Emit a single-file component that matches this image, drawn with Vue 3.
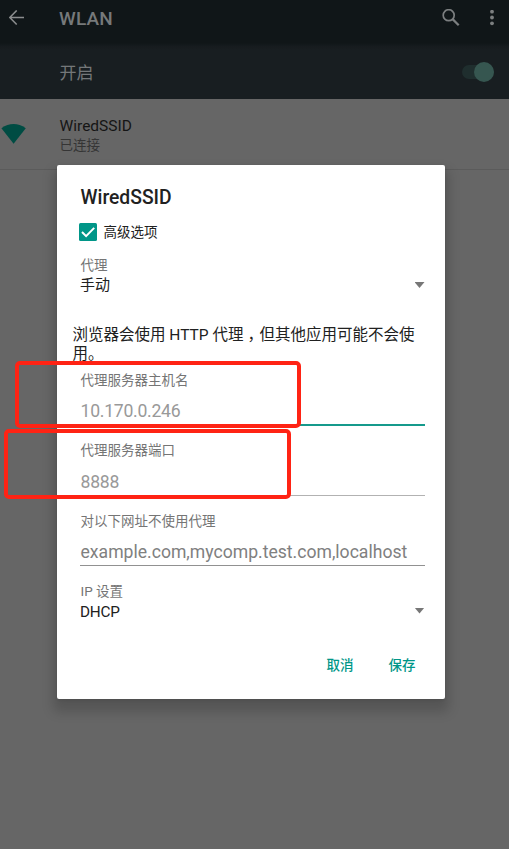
<script setup>
import { ref } from 'vue'

const advanced = ref(true)
const fields = [
  { label: '代理服务器主机名', value: '10.170.0.246', state: 'focused' },
  { label: '代理服务器端口', value: '8888', state: 'light' },
  { label: '对以下网址不使用代理', value: 'example.com,mycomp.test.com,localhost', state: 'hint' },
]
</script>

<template>
  <div class="screen">
    <header class="toolbar">
      <svg class="back" width="16" height="16" viewBox="0 0 16 16" fill="none" stroke="#8b8d8e" stroke-width="1.6">
        <path d="M15 7.5H1M7.7 .5L.8 7.5l6.9 7" />
      </svg>
      <h1>WLAN</h1>
      <svg class="search" width="18" height="18" viewBox="0 0 18 18" fill="none" stroke="#7c7f80">
        <circle cx="6.7" cy="6.2" r="5.5" stroke-width="1.7" />
        <path d="M10.6 10.1L16.7 16.2" stroke-width="2.2" />
      </svg>
      <svg class="more" width="4" height="16" viewBox="0 0 4 16" fill="#7c7f80">
        <circle cx="2" cy="1.7" r="1.9" /><circle cx="2" cy="7.5" r="1.9" /><circle cx="2" cy="13.3" r="1.9" />
      </svg>
    </header>
    <div class="switchbar">
      <span>开启</span>
      <div class="switch"><i class="thumb"></i></div>
    </div>
    <div class="network">
      <svg width="26" height="20" viewBox="0 0 26 20" fill="#004c43">
        <path d="M1.4 4.2Q13.5-4 25.8 4.2L13.6 19.8Z" />
      </svg>
      <div class="network-text">
        <div class="ssid">WiredSSID</div>
        <div class="status">已连接</div>
      </div>
    </div>

    <section class="dialog">
      <h2>WiredSSID</h2>
      <label class="check" @click="advanced = !advanced">
        <span class="box">
          <svg v-if="advanced" width="18" height="18" viewBox="0 0 18 18" fill="none" stroke="#fff" stroke-width="2">
            <path d="M3 9l4.1 4.1L15.2 4.9" />
          </svg>
        </span>
        <span class="check-text">高级选项</span>
      </label>
      <div class="label">代理</div>
      <div class="select manual"><span>手动</span><i class="caret"></i></div>
      <p class="note">浏览器会使用 HTTP 代理<span class="comma">，</span>但其他应用可能不会使用。</p>
      <div v-for="f in fields" :key="f.label" class="field" :class="f.state">
        <div class="label">{{ f.label }}</div>
        <div class="value">{{ f.value }}</div>
      </div>
      <div class="label">IP 设置</div>
      <div class="select dhcp"><span>DHCP</span><i class="caret"></i></div>
      <div class="actions"><span>取消</span><span>保存</span></div>
    </section>

    <div class="mark host"></div>
    <div class="mark port"></div>
  </div>
</template>

<style>
body {
  background: #666;
}
</style>

<style scoped>
* {
  box-sizing: border-box;
}
.screen {
  position: relative;
  width: 509px;
  height: 849px;
  overflow: hidden;
  background: #666;
  font-family: Roboto, "Noto Sans CJK SC", sans-serif;
}
h1, h2, p {
  margin: 0;
}
.toolbar {
  display: flex;
  align-items: center;
  height: 46px;
  padding: 0 15.5px 11px 8.5px;
  background: linear-gradient(#101618 43px, #151b1e 46px);
}
h1 {
  flex: 1;
  margin-left: 34.5px;
  font-size: 19px;
  line-height: 22px;
  font-weight: 500;
  letter-spacing: 0.2px;
  color: #76797a;
  padding-top: 2px;
}
.search {
  margin-right: 30px;
}
.switchbar {
  display: flex;
  align-items: center;
  justify-content: space-between;
  height: 53px;
  padding: 0 15px 2px 59.5px;
  background: linear-gradient(#161b1e, #181e21 4px);
  color: #747779;
  font-size: 17px;
}
.switch {
  display: flex;
  justify-content: flex-end;
  align-items: center;
  width: 32px;
  height: 14px;
  border-radius: 7px;
  background: #1f2e2e;
}
.thumb {
  width: 20px;
  height: 20px;
  flex: none;
  border-radius: 50%;
  background: #365650;
}
.network {
  display: flex;
  height: 71px;
  border-bottom: 1px solid #5b5b5b;
}
.network svg {
  margin: 24.5px 33.5px 0 0;
}
.network-text {
  padding-top: 17px;
}
.ssid {
  font-size: 15.5px;
  line-height: 20px;
  color: #151515;
}
.status {
  font-size: 13.5px;
  line-height: 19px;
  color: #353535;
}
.dialog {
  position: absolute;
  left: 57px;
  top: 165px;
  width: 387.5px;
  height: 533.5px;
  padding: 21px 20px 0 23px;
  border-radius: 2px;
  background: #fff;
  color: #212121;
  box-shadow: 0 9px 12px 4px rgba(0, 0, 0, 0.17), 0 1px 3px rgba(0, 0, 0, 0.1);
}
h2 {
  padding-left: 0.5px;
  font-size: 19.3px;
  line-height: 24px;
  font-weight: 500;
}
.check {
  display: flex;
  align-items: center;
  gap: 6.5px;
  height: 18px;
  margin: 13px 0 15px -1px;
  font-size: 13.5px;
}
.check-text {
  line-height: 18px;
}
.box {
  width: 18px;
  height: 18px;
  border-radius: 1.5px;
  background: #009688;
}
.box svg {
  display: block;
}
.label {
  height: 18px;
  padding-left: 0.5px;
  font-size: 13.5px;
  line-height: 18px;
  color: #757575;
}
.select {
  display: flex;
  align-items: center;
  justify-content: space-between;
  height: 22px;
  font-size: 15px;
}
.manual span {
  line-height: 20px;
}
.dhcp span {
  padding-top: 2px;
  font-size: 15.3px;
  letter-spacing: -0.2px;
}
.caret {
  width: 10px;
  height: 6px;
  background: #777;
  clip-path: polygon(0 0, 100% 0, 50% 100%);
}
.note {
  margin: 30px -7px 7px -7.5px;
  font-size: 15.5px;
  line-height: 19px;
}
.comma {
  padding-left: 4px;
  letter-spacing: -3.5px;
}
.field {
  height: 70.2px;
}
.value {
  width: 345px;
  height: 37px;
  padding: 11px 0 0 0.5px;
  border-bottom: 1px solid #b2b2b2;
  font-size: 17.6px;
  letter-spacing: -0.26px;
  line-height: 22px;
  color: #999;
}
.focused .value {
  border-bottom: 2px solid #159a8c;
}
.light .value {
  padding-top: 11.5px;
}
.hint .label {
  padding-top: 0.5px;
}
.hint .value {
  padding-top: 12px;
  letter-spacing: 0;
  color: #808080;
  border-color: #919191;
}
.actions {
  display: flex;
  justify-content: flex-end;
  gap: 35px;
  margin-top: 33px;
  padding-right: 9px;
  color: #009688;
  font-size: 13.5px;
  font-weight: 500;
  line-height: 20px;
}
.mark {
  position: absolute;
  border: 4px solid #ff2314;
  border-radius: 5px;
}
.host {
  left: 14.5px;
  top: 361px;
  width: 286px;
  height: 67px;
}
.port {
  left: 3.5px;
  top: 428.5px;
  width: 287.5px;
  height: 70.5px;
}
</style>
